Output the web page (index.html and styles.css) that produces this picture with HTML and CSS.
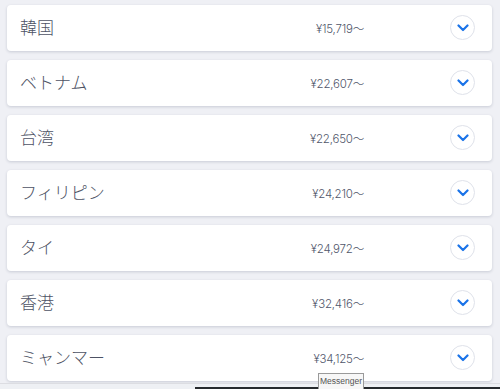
FILE: index.html
```html
<!DOCTYPE html>
<html lang="ja">
<head>
    <meta charset="UTF-8">
    <meta name="viewport" content="width=device-width, initial-scale=1.0">
    <title>国・地域別料金</title>
    <link rel="stylesheet" href="styles.css">
</head>
<body>
    <main class="country-list">
        <div class="country-card">
            <span class="country-name">韓国</span>
            <span class="country-price">¥15,719～</span>
            <button class="toggle-button" aria-label="開く">
                <svg width="12" height="8" viewBox="0 0 12 8"><path d="M1.5 1.5 6 6l4.5-4.5" fill="none" stroke="#1a73e8" stroke-width="2.2" stroke-linecap="round" stroke-linejoin="round"/></svg>
            </button>
        </div>
        <div class="country-card">
            <span class="country-name">ベトナム</span>
            <span class="country-price">¥22,607～</span>
            <button class="toggle-button" aria-label="開く">
                <svg width="12" height="8" viewBox="0 0 12 8"><path d="M1.5 1.5 6 6l4.5-4.5" fill="none" stroke="#1a73e8" stroke-width="2.2" stroke-linecap="round" stroke-linejoin="round"/></svg>
            </button>
        </div>
        <div class="country-card">
            <span class="country-name">台湾</span>
            <span class="country-price">¥22,650～</span>
            <button class="toggle-button" aria-label="開く">
                <svg width="12" height="8" viewBox="0 0 12 8"><path d="M1.5 1.5 6 6l4.5-4.5" fill="none" stroke="#1a73e8" stroke-width="2.2" stroke-linecap="round" stroke-linejoin="round"/></svg>
            </button>
        </div>
        <div class="country-card">
            <span class="country-name">フィリピン</span>
            <span class="country-price">¥24,210～</span>
            <button class="toggle-button" aria-label="開く">
                <svg width="12" height="8" viewBox="0 0 12 8"><path d="M1.5 1.5 6 6l4.5-4.5" fill="none" stroke="#1a73e8" stroke-width="2.2" stroke-linecap="round" stroke-linejoin="round"/></svg>
            </button>
        </div>
        <div class="country-card">
            <span class="country-name">タイ</span>
            <span class="country-price">¥24,972～</span>
            <button class="toggle-button" aria-label="開く">
                <svg width="12" height="8" viewBox="0 0 12 8"><path d="M1.5 1.5 6 6l4.5-4.5" fill="none" stroke="#1a73e8" stroke-width="2.2" stroke-linecap="round" stroke-linejoin="round"/></svg>
            </button>
        </div>
        <div class="country-card">
            <span class="country-name">香港</span>
            <span class="country-price">¥32,416～</span>
            <button class="toggle-button" aria-label="開く">
                <svg width="12" height="8" viewBox="0 0 12 8"><path d="M1.5 1.5 6 6l4.5-4.5" fill="none" stroke="#1a73e8" stroke-width="2.2" stroke-linecap="round" stroke-linejoin="round"/></svg>
            </button>
        </div>
        <div class="country-card">
            <span class="country-name">ミャンマー</span>
            <span class="country-price">¥34,125～</span>
            <button class="toggle-button" aria-label="開く">
                <svg width="12" height="8" viewBox="0 0 12 8"><path d="M1.5 1.5 6 6l4.5-4.5" fill="none" stroke="#1a73e8" stroke-width="2.2" stroke-linecap="round" stroke-linejoin="round"/></svg>
            </button>
        </div>
    </main>

    <footer class="taskbar-edge">
        <div class="taskbar-bar"></div>
    </footer>

    <div class="tooltip">Messenger</div>
</body>
</html>
```

FILE: styles.css
```css
html, body {
    height: 389px;
    overflow: hidden;
}

body {
    margin: 0;
    padding: 0;
    background-color: #eff0f5;
    font-family: "Noto Sans CJK JP", "Noto Sans", sans-serif;
    position: relative;
}

.country-list {
    display: flex;
    flex-direction: column;
    gap: 9px;
    padding: 5px 8px 0 7px;
}

.country-card {
    display: flex;
    align-items: center;
    height: 46px;
    padding-left: 13px;
    background-color: #fff;
    border-radius: 4px;
    box-shadow: 0 1px 3px rgba(30, 40, 70, 0.18);
}

.country-name {
    flex: 1;
    margin-bottom: 3px;
    font-size: 17px;
    font-weight: 300;
    color: #4d5264;
}

.country-price {
    margin-right: 86px;
    margin-bottom: 1px;
    font-family: "Inter", "Noto Sans CJK JP", sans-serif;
    font-size: 11.5px;
    font-weight: 300;
    color: #50566a;
    letter-spacing: -0.2px;
}

.toggle-button {
    display: flex;
    align-items: center;
    justify-content: center;
    width: 25px;
    height: 25px;
    margin-right: 17px;
    margin-bottom: 1px;
    padding: 0;
    padding-top: 1px;
    background: #fff;
    border: 1.5px solid #dfe2ea;
    border-radius: 50%;
    cursor: pointer;
}

/* bottom strip of the desktop behind the window */
.taskbar-edge {
    position: absolute;
    left: 0;
    right: 0;
    bottom: 0;
    height: 5px;
    border-top: 1px solid #dcdde2;
    background-color: #eef0f4;
}

.taskbar-bar {
    position: absolute;
    left: 195px;
    right: 0;
    bottom: 0;
    height: 2px;
    background-color: #262a2e;
}

.tooltip {
    position: absolute;
    left: 318px;
    top: 373px;
    width: 46px;
    height: 18px;
    padding-top: 1px;
    box-sizing: border-box;
    border: 1px solid #9a9a9a;
    background-color: #f7f7f7;
    font-family: "Liberation Sans", Arial, sans-serif;
    font-size: 8.5px;
    line-height: 12px;
    text-align: center;
    color: #555;
}
```
